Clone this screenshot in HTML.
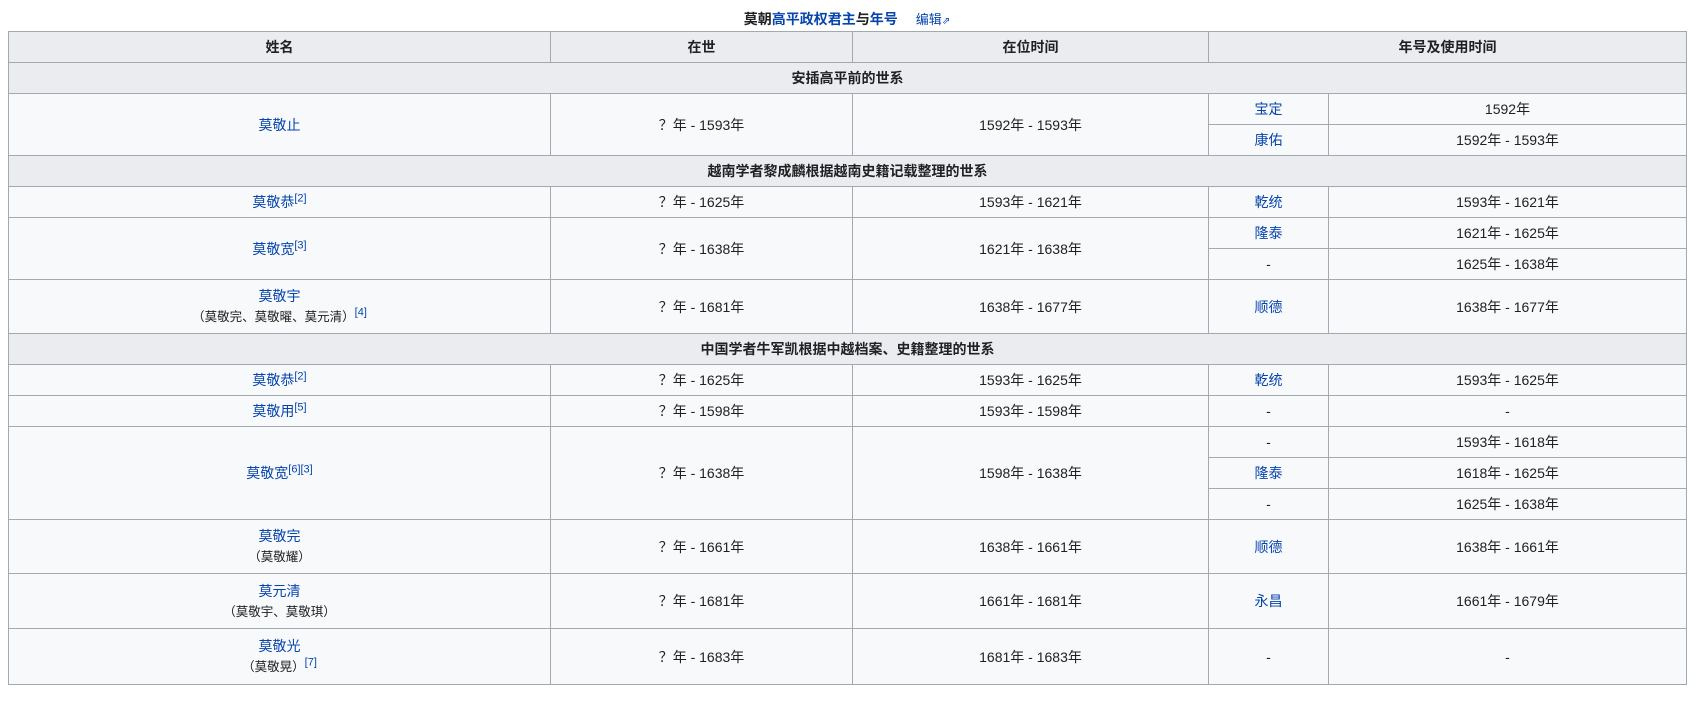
<!DOCTYPE html>
<html><head><meta charset="utf-8">
<style>
body{margin:0;background:#fff;font-family:"Liberation Sans","Noto Sans CJK SC",sans-serif;font-size:14px;color:#202122}
.cap{position:absolute;top:9px;left:8px;width:1678px;text-align:center;font-weight:bold;font-size:14px;line-height:20px}
.cap a{color:#0645ad}
.cap .ed{font-weight:normal;font-size:13px;margin-left:18px;color:#0645ad}
table{position:absolute;left:8px;top:31px;border-collapse:collapse;table-layout:fixed;width:1678px}
td,th{border:1px solid #a2a9b1;text-align:center;padding:0 4px;background:#f8f9fa;line-height:20px}
th{background:#eaecf0;font-weight:bold}
a{color:#0645ad;text-decoration:none}
sup{font-size:11px;vertical-align:super;line-height:0}
.s{font-size:12.5px}
tr{height:31px}
</style></head><body>
<div class="cap">莫朝<a>高平政权君主</a>与<a>年号</a><span class="ed">编辑<span style="font-size:10px">⇗</span></span></div>
<table>
<colgroup><col style="width:542px"><col style="width:302px"><col style="width:356px"><col style="width:120px"><col style="width:358px"></colgroup>
<tr><th>姓名</th><th>在世</th><th>在位时间</th><th colspan="2">年号及使用时间</th></tr>
<tr><th colspan="5">安插高平前的世系</th></tr>
<tr><td rowspan="2"><a>莫敬止</a></td><td rowspan="2">？年 - 1593年</td><td rowspan="2">1592年 - 1593年</td><td><a>宝定</a></td><td>1592年</td></tr>
<tr><td><a>康佑</a></td><td>1592年 - 1593年</td></tr>
<tr><th colspan="5">越南学者黎成麟根据越南史籍记载整理的世系</th></tr>
<tr><td><a>莫敬恭</a><sup><a>[2]</a></sup></td><td>？年 - 1625年</td><td>1593年 - 1621年</td><td><a>乾统</a></td><td>1593年 - 1621年</td></tr>
<tr><td rowspan="2"><a>莫敬宽</a><sup><a>[3]</a></sup></td><td rowspan="2">？年 - 1638年</td><td rowspan="2">1621年 - 1638年</td><td><a>隆泰</a></td><td>1621年 - 1625年</td></tr>
<tr><td>-</td><td>1625年 - 1638年</td></tr>
<tr style="height:54px"><td><a>莫敬宇</a><br><span class="s">（莫敬完、莫敬曜、莫元清）</span><sup><a>[4]</a></sup></td><td>？年 - 1681年</td><td>1638年 - 1677年</td><td><a>顺德</a></td><td>1638年 - 1677年</td></tr>
<tr><th colspan="5">中国学者牛军凯根据中越档案、史籍整理的世系</th></tr>
<tr><td><a>莫敬恭</a><sup><a>[2]</a></sup></td><td>？年 - 1625年</td><td>1593年 - 1625年</td><td><a>乾统</a></td><td>1593年 - 1625年</td></tr>
<tr><td><a>莫敬用</a><sup><a>[5]</a></sup></td><td>？年 - 1598年</td><td>1593年 - 1598年</td><td>-</td><td>-</td></tr>
<tr><td rowspan="3"><a>莫敬宽</a><sup><a>[6]</a><a>[3]</a></sup></td><td rowspan="3">？年 - 1638年</td><td rowspan="3">1598年 - 1638年</td><td>-</td><td>1593年 - 1618年</td></tr>
<tr><td><a>隆泰</a></td><td>1618年 - 1625年</td></tr>
<tr><td>-</td><td>1625年 - 1638年</td></tr>
<tr style="height:54px"><td><a>莫敬完</a><br><span class="s">（莫敬耀）</span></td><td>？年 - 1661年</td><td>1638年 - 1661年</td><td><a>顺德</a></td><td>1638年 - 1661年</td></tr>
<tr style="height:55px"><td><a>莫元清</a><br><span class="s">（莫敬宇、莫敬琪）</span></td><td>？年 - 1681年</td><td>1661年 - 1681年</td><td><a>永昌</a></td><td>1661年 - 1679年</td></tr>
<tr style="height:56px"><td><a>莫敬光</a><br><span class="s">（莫敬晃）</span><sup><a>[7]</a></sup></td><td>？年 - 1683年</td><td>1681年 - 1683年</td><td>-</td><td>-</td></tr>
</table>
</body></html>
